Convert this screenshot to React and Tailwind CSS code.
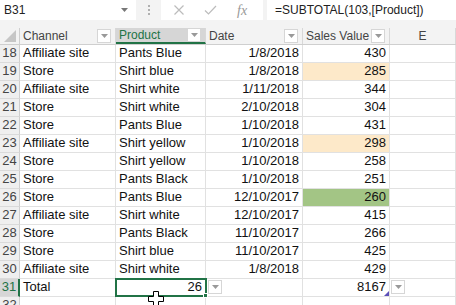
import React from "react";

const ROWS = [
  [18, "Affiliate site", "Pants Blue", "1/8/2018", "430", ""],
  [19, "Store", "Shirt blue", "1/8/2018", "285", "orange"],
  [20, "Affiliate site", "Shirt white", "1/11/2018", "344", ""],
  [21, "Store", "Shirt white", "2/10/2018", "304", ""],
  [22, "Store", "Pants Blue", "1/10/2018", "431", ""],
  [23, "Affiliate site", "Shirt yellow", "1/10/2018", "298", "orange"],
  [24, "Store", "Shirt yellow", "1/10/2018", "258", ""],
  [25, "Store", "Pants Black", "1/10/2018", "251", ""],
  [26, "Store", "Pants Blue", "12/10/2017", "260", "green"],
  [27, "Affiliate site", "Shirt white", "12/10/2017", "415", ""],
  [28, "Store", "Pants Black", "11/10/2017", "266", ""],
  [29, "Store", "Shirt blue", "11/10/2017", "425", ""],
  [30, "Affiliate site", "Shirt white", "1/8/2018", "429", ""],
];

const FILL = {
  "": "",
  orange: "bg-[#fde9c9]",
  green: "bg-[#a3c585]",
};

function DropArrow({ className = "" }) {
  return (
    <span
      className={`flex h-[14px] w-[14px] shrink-0 items-center justify-center border border-[#d6d6d6] bg-white ${className}`}
    >
      <svg width="7" height="4" viewBox="0 0 7 4">
        <path d="M0 0h7L3.5 4z" fill="#999" />
      </svg>
    </span>
  );
}

function HeaderCell({ label, width, selected }) {
  return (
    <div
      className={`flex h-full items-center justify-between whitespace-nowrap border-r border-[#d8d8d8] pl-[3px] pr-[4px] text-[12px] ${width} ${
        selected ? "bg-[#d6d6d6] text-[#217346] border-b-2 border-b-[#217346]" : "text-[#444]"
      }`}
    >
      <span>{label}</span>
      <DropArrow />
    </div>
  );
}

function Cell({ children, width, right, fill = "" }) {
  return (
    <div
      className={`flex h-full items-end border-r border-b border-[#e1e1e1] px-[3px] pb-[1px] ${width} ${fill} ${
        right ? "justify-end" : ""
      }`}
    >
      <span className="whitespace-nowrap leading-[16px]">{children}</span>
    </div>
  );
}

function RowHead({ n, selected }) {
  return (
    <div
      className={`flex h-full w-[20px] shrink-0 items-end justify-center border-b border-[#dadada] pb-[1px] leading-[16px] ${
        selected
          ? "bg-[#d6d6d6] text-[#217346] border-r-2 border-r-[#217346]"
          : "bg-[#efefef] text-[#444] border-r border-r-[#cfcfcf]"
      }`}
    >
      {n}
    </div>
  );
}

export default function App() {
  return (
    <div
      className="relative h-[305px] w-[456px] overflow-hidden bg-[#f3f3f3] text-[13px] text-[#111]"
      style={{ fontFamily: '"Liberation Sans", Arial, sans-serif' }}
    >
      {/* formula bar */}
      <div className="flex h-[20px] items-stretch text-[12px]">
        <div className="flex w-[136px] items-center justify-between bg-white pl-[4px] pr-[8px] text-[#222]">
          <span>B31</span>
          <svg width="7" height="4" viewBox="0 0 7 4">
            <path d="M0 0h7L3.5 4z" fill="#777" />
          </svg>
        </div>
        <div className="flex w-[25px] flex-col items-center justify-center gap-[2px]">
          <span className="h-[2px] w-[2px] bg-[#b0b0b0]" />
          <span className="h-[2px] w-[2px] bg-[#b0b0b0]" />
          <span className="h-[2px] w-[2px] bg-[#b0b0b0]" />
        </div>
        <div className="flex w-[102px] items-center bg-white">
          <svg width="12" height="12" viewBox="0 0 12 12" className="ml-[12px]">
            <path d="M1.5 1.5l9 9M10.5 1.5l-9 9" stroke="#bcbcbc" strokeWidth="1.2" />
          </svg>
          <svg width="13" height="12" viewBox="0 0 13 12" className="ml-[19px]">
            <path d="M1 6.5l3.5 3.5L12 2" stroke="#bcbcbc" strokeWidth="1.2" fill="none" />
          </svg>
          <span
            className="ml-[20px] text-[14px] italic text-[#999]"
            style={{ fontFamily: '"Liberation Serif", serif' }}
          >
            fx
          </span>
        </div>
        <div className="w-[4px]" />
        <div className="flex flex-1 items-center bg-white pl-[8px] text-[#222]">
          =SUBTOTAL(103,[Product])
        </div>
      </div>
      <div className="h-[8px]" />

      {/* header row */}
      <div className="flex h-[17px] items-stretch border-b border-[#cfcfcf] bg-[#f3f3f3]">
        <div className="relative w-[20px] shrink-0 border-r border-[#cfcfcf]">
          <svg width="12" height="12" viewBox="0 0 12 12" className="absolute bottom-[2px] right-[3px]">
            <path d="M12 0V12H0z" fill="#c6c6c6" />
          </svg>
        </div>
        <HeaderCell label="Channel" width="w-[96px]" />
        <HeaderCell label="Product" width="w-[90px]" selected />
        <HeaderCell label="Date" width="w-[97px]" />
        <HeaderCell label="Sales Value" width="w-[87px]" />
        <div className="flex flex-1 items-center justify-center border-r border-[#d8d8d8] text-[12px] text-[#444]">E</div>
      </div>

      {/* data rows */}
      <div className="bg-white">
        {ROWS.map(([n, ch, pr, dt, sv, fill]) => (
          <div key={n} className="flex h-[18px]">
            <RowHead n={n} />
            <Cell width="w-[96px]">{ch}</Cell>
            <Cell width="w-[90px]">{pr}</Cell>
            <Cell width="w-[97px]" right>
              {dt}
            </Cell>
            <Cell width="w-[87px]" right fill={FILL[fill]}>
              {sv}
            </Cell>
            <Cell width="flex-1" />
          </div>
        ))}

        {/* total row */}
        <div className="relative flex h-[18px]">
          <RowHead n={31} selected />
          <Cell width="w-[96px]">Total</Cell>
          <Cell width="w-[90px]" right>
            26
          </Cell>
          <Cell width="w-[97px]" />
          <Cell width="w-[87px]" right>
            8167
          </Cell>
          <Cell width="flex-1" />

          {/* selection border */}
          <div className="pointer-events-none absolute left-[115px] top-[-1px] h-[19px] w-[92px] border-2 border-[#217346]" />
          <div className="absolute left-[203px] top-[14px] h-[5px] w-[5px] border border-white bg-[#217346]" />
          <DropArrow className="absolute left-[208px] top-[1px]" />

          <svg width="5" height="5" viewBox="0 0 5 5" className="absolute left-[384px] top-[12px]">
            <path d="M5 0V5H0z" fill="#5b4fb8" />
          </svg>
          <DropArrow className="absolute left-[391px] top-[1px]" />
        </div>

        <div className="flex h-[18px]">
          <RowHead n={32} />
          <Cell width="w-[96px]" />
          <Cell width="w-[90px]" />
          <Cell width="w-[97px]" />
          <Cell width="w-[87px]" />
          <Cell width="flex-1" />
        </div>
      </div>

      {/* cursor */}
      <svg width="16" height="16" viewBox="0 0 16 16" className="absolute left-[148px] top-[291px]">
        <path d="M5.5 0.5h5v5h5v5h-5v5h-5v-5h-5v-5h5z" fill="white" stroke="black" strokeWidth="1" />
      </svg>
    </div>
  );
}
